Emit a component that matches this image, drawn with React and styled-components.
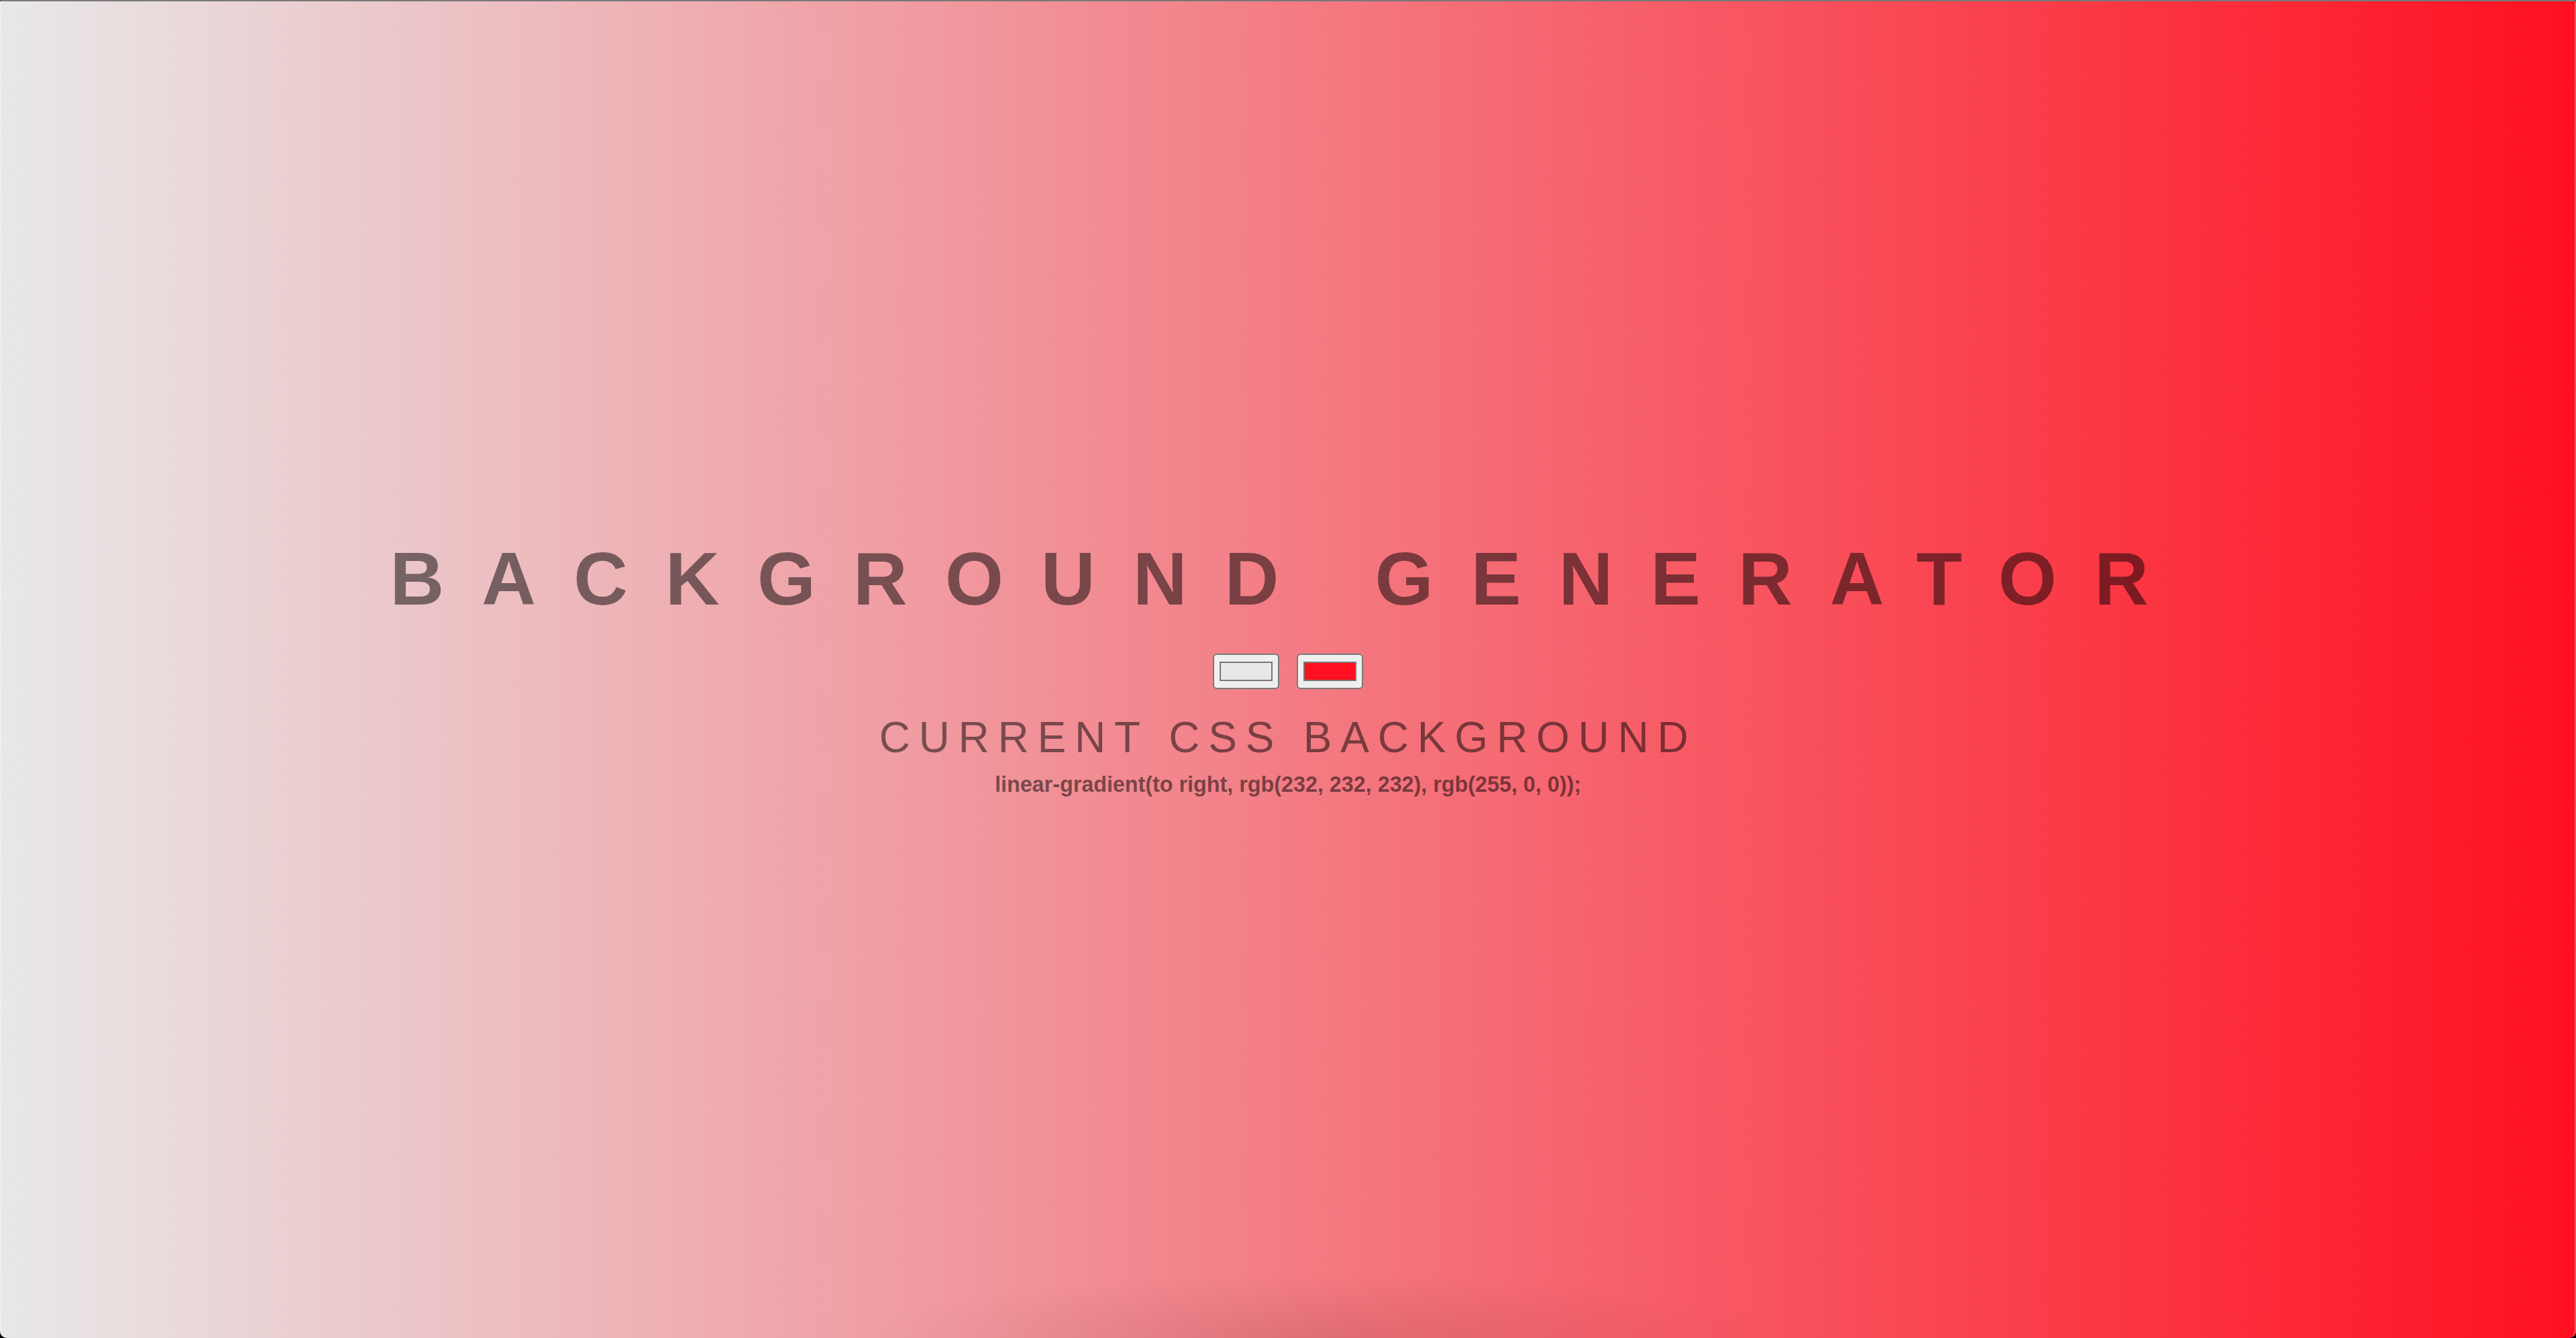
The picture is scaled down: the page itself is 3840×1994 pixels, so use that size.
import React from "react";
import styled, { createGlobalStyle } from "styled-components";

const Global = createGlobalStyle`
  html, body {
    margin: 0;
    padding: 0;
    background: #000;
  }
  * { box-sizing: border-box; }
`;

const Window = styled.main`
  position: relative;
  overflow: hidden;
  width: 100vw;
  height: 100vh;
  padding-bottom: 4px;
  display: flex;
  flex-direction: column;
  align-items: center;
  justify-content: center;
  border-top: 2px solid #787878;
  border-left: 2px solid rgba(255, 255, 255, 0.35);
  border-right: 2px solid rgba(255, 255, 255, 0.3);
  border-bottom-left-radius: 10px;
  border-bottom-right-radius: 10px;
  background: linear-gradient(to right, rgb(232, 232, 232), rgb(255, 16, 32));
  background-origin: border-box;
  font-family: "Liberation Sans", Arial, Helvetica, sans-serif;
  color: rgba(0, 0, 0, 0.5);
  text-align: center;

  &::after {
    content: "";
    position: absolute;
    left: 1280px;
    bottom: 0;
    width: 1320px;
    height: 95px;
    pointer-events: none;
    background: radial-gradient(
      ellipse 52% 100% at 52% 100%,
      rgba(40, 0, 0, 0.1),
      rgba(40, 0, 0, 0.04) 60%,
      rgba(40, 0, 0, 0) 100%
    );
  }
`;

const Title = styled.h1`
  margin: 0 0 55px;
  font-size: 112px;
  line-height: 1;
  font-weight: 700;
  letter-spacing: 0.5em;
`;

const Pickers = styled.div`
  display: flex;
  gap: 26px;
  margin-bottom: 40px;
`;

const ColorInput = styled.input`
  -webkit-appearance: none;
  appearance: none;
  width: 99px;
  height: 53px;
  padding: 0;
  margin: 0;
  border: 2px solid #7a7a7a;
  border-radius: 6px;
  background: #efefef;
  cursor: pointer;

  &::-webkit-color-swatch-wrapper {
    padding: 10px 8px;
  }
  &::-webkit-color-swatch {
    border: 2px solid #777777;
    border-radius: 0;
  }
`;

const Subtitle = styled.h3`
  margin: 0 0 22px;
  font-size: 64px;
  line-height: 1;
  font-weight: 400;
  letter-spacing: 0.2em;
`;

const Code = styled.p`
  margin: 0;
  font-size: 32.3px;
  line-height: 1;
  font-weight: 700;
`;

export default function App() {
  const left = "#e8e8e8";
  const right = "#ff0f1f";
  return (
    <>
      <Global />
      <Window>
        <Title>BACKGROUND GENERATOR</Title>
        <Pickers>
          <ColorInput type="color" defaultValue={left} aria-label="First color" />
          <ColorInput type="color" defaultValue={right} aria-label="Second color" />
        </Pickers>
        <Subtitle>CURRENT CSS BACKGROUND</Subtitle>
        <Code>linear-gradient(to right, rgb(232, 232, 232), rgb(255, 0, 0));</Code>
      </Window>
    </>
  );
}
